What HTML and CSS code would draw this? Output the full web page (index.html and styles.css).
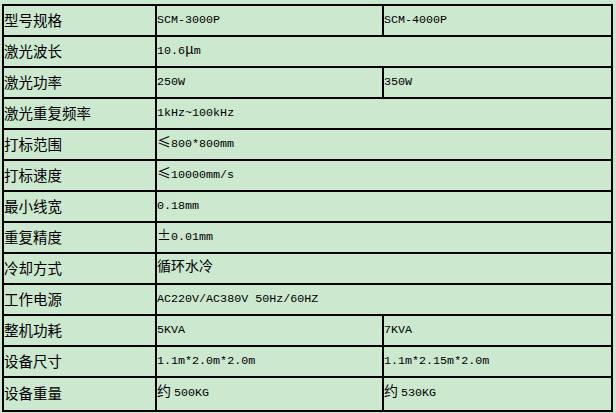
FILE: index.html
```html
<!DOCTYPE html>
<html lang="zh-CN">
<head>
<meta charset="utf-8">
<title>参数</title>
<link rel="stylesheet" href="styles.css">
</head>
<body>
<div class="spec">
  <div class="c label">型号规格</div><div class="c val">SCM-3000P</div><div class="c val">SCM-4000P</div>
  <div class="c label">激光波长</div><div class="c val span">10.6<span class="cjk">μ</span>m</div>
  <div class="c label">激光功率</div><div class="c val">250W</div><div class="c val">350W</div>
  <div class="c label">激光重复频率</div><div class="c val span">1kHz~100kHz</div>
  <div class="c label">打标范围</div><div class="c val span"><span class="cjk">≤</span>800*800mm</div>
  <div class="c label">打标速度</div><div class="c val span"><span class="cjk">≤</span>10000mm/s</div>
  <div class="c label">最小线宽</div><div class="c val span">0.18mm</div>
  <div class="c label">重复精度</div><div class="c val span"><span class="cjk">±</span>0.01mm</div>
  <div class="c label">冷却方式</div><div class="c val span"><span class="cjk">循环水冷</span></div>
  <div class="c label">工作电源</div><div class="c val span">AC220V/AC380V 50Hz/60HZ</div>
  <div class="c label">整机功耗</div><div class="c val">5KVA</div><div class="c val">7KVA</div>
  <div class="c label">设备尺寸</div><div class="c val">1.1m*2.0m*2.0m</div><div class="c val">1.1m*2.15m*2.0m</div>
  <div class="c label tall">设备重量</div><div class="c val tall"><span class="cjk gap">约</span>500KG</div><div class="c val tall"><span class="cjk gap">约</span>530KG</div>
</div>
</body>
</html>
```

FILE: styles.css
```css
html, body {
  margin: 0;
  padding: 0;
  background: #cce8cf;
}
body {
  padding: 4px 0 0 2px;
}
.spec {
  display: grid;
  grid-template-columns: 151px 225px 227px;
  grid-template-rows: repeat(12, 29px) 32px;
  gap: 2px;
  padding: 2px;
  background: #000;
  width: max-content;
}
.c {
  background: #cce8cf;
  color: #000;
  white-space: nowrap;
  overflow: hidden;
  line-height: 28px;
}
.c.tall {
  line-height: 30px;
}
.label {
  font-family: "Noto Sans CJK SC", sans-serif;
  font-size: 14.5px;
}
.val {
  font-family: "Liberation Mono", "Noto Sans CJK SC", monospace;
  font-size: 11.7px;
}
.span {
  grid-column: span 2;
}
.cjk {
  font-family: "Noto Sans CJK SC", sans-serif;
  font-size: 14px;
  line-height: 1;
}
.cjk.gap {
  margin-right: 3px;
}
```
